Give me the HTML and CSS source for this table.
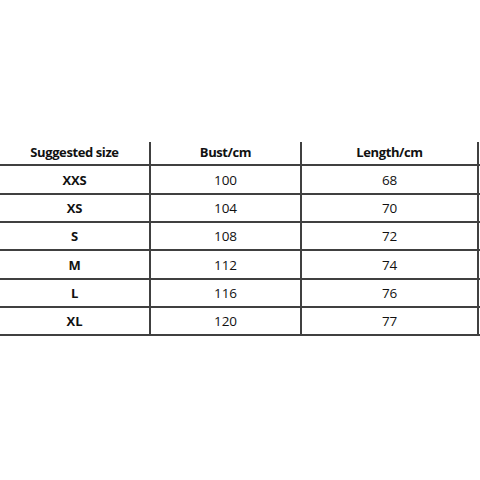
FILE: index.html
```html
<!DOCTYPE html>
<html>
<head>
<meta charset="utf-8">
<link rel="stylesheet" href="styles.css">
</head>
<body>
<div class="sheet">
  <div class="table">
    <div class="cell head">Suggested size</div>
    <div class="cell head">Bust/cm</div>
    <div class="cell head">Length/cm</div>
    <div class="cell head"></div>

    <div class="cell size r29">XXS</div><div class="cell r29">100</div><div class="cell r29">68</div><div class="cell r29"></div>
    <div class="cell size r28">XS</div><div class="cell r28">104</div><div class="cell r28">70</div><div class="cell r28"></div>
    <div class="cell size r28">S</div><div class="cell r28">108</div><div class="cell r28">72</div><div class="cell r28"></div>
    <div class="cell size r29">M</div><div class="cell r29">112</div><div class="cell r29">74</div><div class="cell r29"></div>
    <div class="cell size r28">L</div><div class="cell r28">116</div><div class="cell r28">76</div><div class="cell r28"></div>
    <div class="cell size r28">XL</div><div class="cell r28">120</div><div class="cell r28">77</div><div class="cell r28"></div>
  </div>
</div>
</body>
</html>
```

FILE: styles.css
```css
html, body {
  margin: 0;
  padding: 0;
  background: #ffffff;
  overflow: hidden;
}

.sheet {
  width: 480px;
  height: 480px;
  padding-top: 142px;
  box-sizing: border-box;
  overflow: hidden;
}

.table {
  display: grid;
  grid-template-columns: 151px 151px 177px 150px;
  width: 629px;
  font-family: "Open Sans", "Noto Sans", sans-serif;
  font-size: 13.5px;
  color: #111111;
}

.cell {
  display: flex;
  align-items: center;
  justify-content: center;
  border-right: 2px solid #404040;
  border-bottom: 2px solid #404040;
  box-sizing: border-box;
  letter-spacing: -0.1px;
}

.head {
  height: 24px;
  font-size: 13px;
  font-weight: 700;
  letter-spacing: -0.4px;
  padding-bottom: 2px;
}

.size {
  font-size: 13px;
  font-weight: 700;
}

.r29 {
  height: 29px;
}

.r28 {
  height: 28px;
}
```
